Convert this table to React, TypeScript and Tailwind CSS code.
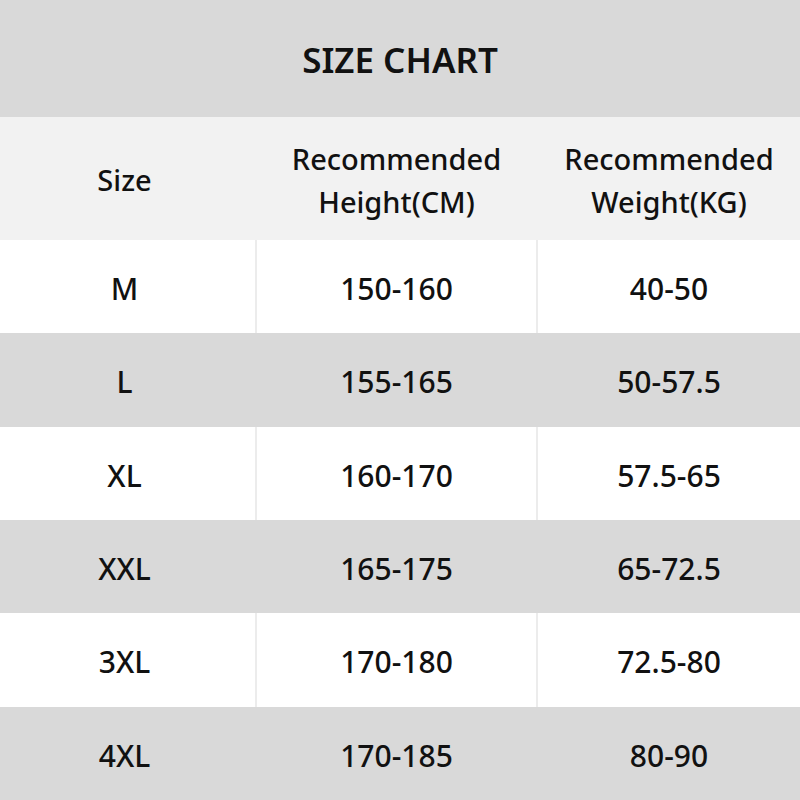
const rows = [
  { size: 'M', height: '150-160', weight: '40-50' },
  { size: 'L', height: '155-165', weight: '50-57.5' },
  { size: 'XL', height: '160-170', weight: '57.5-65' },
  { size: 'XXL', height: '165-175', weight: '65-72.5' },
  { size: '3XL', height: '170-180', weight: '72.5-80' },
  { size: '4XL', height: '170-185', weight: '80-90' },
];

export default function App() {
  return (
    <div
      className="w-[800px] h-[800px] flex flex-col bg-white text-[#111] font-medium"
      style={{ fontFamily: '"Noto Sans", "Open Sans", sans-serif' }}
    >
      <div className="h-[117px] flex items-center justify-center bg-[#d9d9d9] text-[35px] font-semibold pt-[4px]">
        SIZE CHART
      </div>
      <div className="h-[123px] grid grid-cols-[255px_283px_262px] bg-[#f2f2f2] text-[29px] leading-[43px] text-center pt-[2px]">
        <div className="flex items-center justify-center pr-[6px]">Size</div>
        <div className="flex items-center justify-center">
          Recommended<br />Height(CM)
        </div>
        <div className="flex items-center justify-center">
          Recommended<br />Weight(KG)
        </div>
      </div>
      {rows.map((r, i) => {
        const gray = i % 2 === 1;
        return (
          <div
            key={r.size}
            className={
              gray
                ? 'flex-1 grid grid-cols-[255px_283px_262px] bg-[#d9d9d9] text-[30px] text-center'
                : 'flex-1 grid grid-cols-[255px_283px_262px] bg-white text-[30px] text-center'
            }
          >
            <div className="flex items-center justify-center pt-[4px] pr-[6px]">{r.size}</div>
            <div
              className={
                gray
                  ? 'flex items-center justify-center pt-[4px]'
                  : 'flex items-center justify-center pt-[4px] border-x-2 border-[#ececec]'
              }
            >
              {r.height}
            </div>
            <div className="flex items-center justify-center pt-[4px]">{r.weight}</div>
          </div>
        );
      })}
    </div>
  );
}
